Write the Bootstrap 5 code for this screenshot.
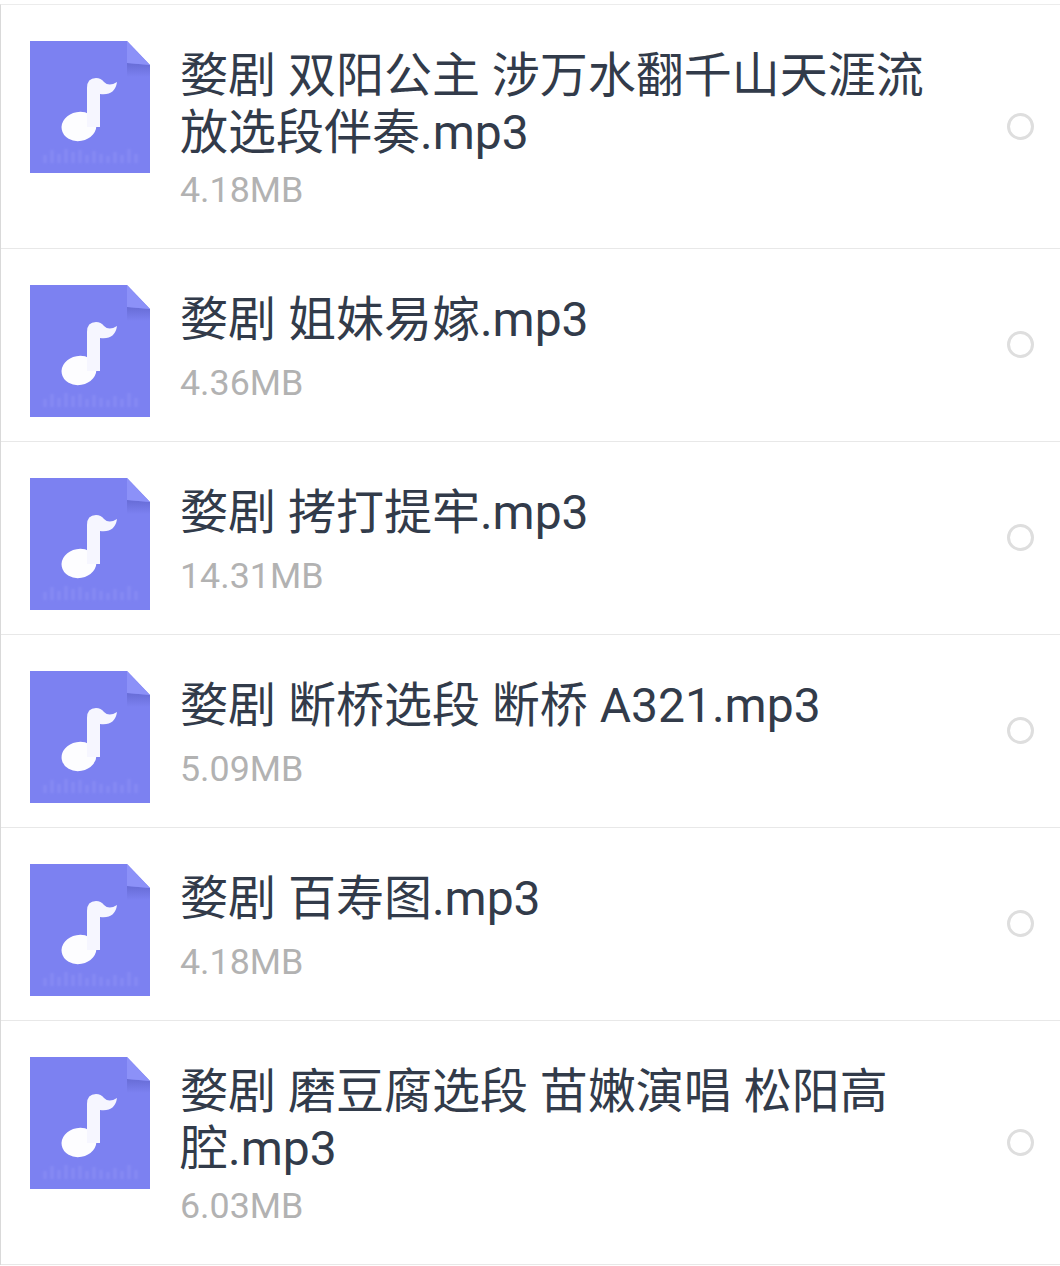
<!DOCTYPE html>
<html lang="zh-CN">
<head>
  <meta charset="UTF-8">
  <title>戏曲文件列表</title>
  <link href="https://cdn.jsdelivr.net/npm/bootstrap@5.3.0/dist/css/bootstrap.min.css" rel="stylesheet">
  <style>
    body { background: #fff; font-family: Roboto, "Noto Sans CJK SC", sans-serif; overflow: hidden; }
    .file-list { margin-top: 4px; border-left: 1px solid #d9d9d9; border-top: 1px solid #ececec; }
    .file-row { padding: 36px 26px 0 29px; gap: 30px; border-bottom: 1px solid #e8e8e8; }
    .file-row.one-line { height: 193px; }
    .file-row.two-line { height: 244px; }
    .file-icon { width: 120px; height: 132px; flex: none; display: block; }
    .file-name { font-size: 48px; line-height: 57px; color: #323b4a; margin-top: 6px; }
    .file-size { font-size: 35.800px; line-height: 40px; color: #b2b2b2; margin-top: 9px; }
    .one-line .file-size { margin-top: 15px; }
    .file-pick { width: 27px; height: 27px; flex: none; border: 3px solid #dedede; border-radius: 50%; position: relative; top: -18px; }
    .one-line .file-pick { top: -19px; }
  </style>
</head>
<body>

  <svg width="0" height="0" class="position-absolute">
    <defs>
      <linearGradient id="foldShade" x1="0" y1="0" x2="0" y2="1">
        <stop offset="0" stop-color="#676cd6"/>
        <stop offset="1" stop-color="#7c81f1"/>
      </linearGradient>
      <filter id="softBars"><feGaussianBlur stdDeviation="0.8"/></filter>
    </defs>
    <symbol id="musicFile" viewBox="0 0 120 132">
      <path d="M0 0H97L120 24V132H0Z" fill="#7c81f1"/>
      <path d="M97 22L120 24V36H97Z" fill="url(#foldShade)"/>
      <path d="M97 0L120 24L97 22Z" fill="#8c91f8"/>
      <g stroke="#878bf4" stroke-width="3" filter="url(#softBars)">
        <path d="M15 122v-8M22 122v-13M29 122v-9M36 122v-14M43 122v-11M50 122v-13M57 122v-8M64 122v-12M71 122v-9M78 122v-7M85 122v-11M92 122v-8M99 122v-14M106 122v-9"/>
      </g>
      <ellipse cx="49" cy="85.500" rx="17.500" ry="14.500" transform="rotate(-10 49 85.500)" fill="#fdfdff"/>
      <path d="M57 86V47Q57 37 66 37Q71 37 74 41Q79 46 87 41Q85 55 70 53V86Z" fill="#f6f6ff"/>
    </symbol>
  </svg>

  <div class="file-list">

    <div class="file-row two-line d-flex align-items-start">
      <svg class="file-icon"><use href="#musicFile"/></svg>
      <div class="flex-grow-1">
        <div class="file-name">婺剧 双阳公主 涉万水翻千山天涯流<br>放选段伴奏.mp3</div>
        <div class="file-size">4.18MB</div>
      </div>
      <div class="file-pick align-self-center"></div>
    </div>

    <div class="file-row one-line d-flex align-items-start">
      <svg class="file-icon"><use href="#musicFile"/></svg>
      <div class="flex-grow-1">
        <div class="file-name">婺剧 姐妹易嫁.mp3</div>
        <div class="file-size">4.36MB</div>
      </div>
      <div class="file-pick align-self-center"></div>
    </div>

    <div class="file-row one-line d-flex align-items-start">
      <svg class="file-icon"><use href="#musicFile"/></svg>
      <div class="flex-grow-1">
        <div class="file-name">婺剧 拷打提牢.mp3</div>
        <div class="file-size">14.31MB</div>
      </div>
      <div class="file-pick align-self-center"></div>
    </div>

    <div class="file-row one-line d-flex align-items-start">
      <svg class="file-icon"><use href="#musicFile"/></svg>
      <div class="flex-grow-1">
        <div class="file-name">婺剧 断桥选段 断桥 A321.mp3</div>
        <div class="file-size">5.09MB</div>
      </div>
      <div class="file-pick align-self-center"></div>
    </div>

    <div class="file-row one-line d-flex align-items-start">
      <svg class="file-icon"><use href="#musicFile"/></svg>
      <div class="flex-grow-1">
        <div class="file-name">婺剧 百寿图.mp3</div>
        <div class="file-size">4.18MB</div>
      </div>
      <div class="file-pick align-self-center"></div>
    </div>

    <div class="file-row two-line d-flex align-items-start">
      <svg class="file-icon"><use href="#musicFile"/></svg>
      <div class="flex-grow-1">
        <div class="file-name">婺剧 磨豆腐选段 苗嫩演唱 松阳高<br>腔.mp3</div>
        <div class="file-size">6.03MB</div>
      </div>
      <div class="file-pick align-self-center"></div>
    </div>

  </div>

</body>
</html>
